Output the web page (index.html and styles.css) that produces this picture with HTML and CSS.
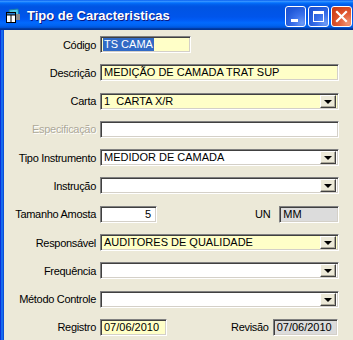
FILE: index.html
```html
<!DOCTYPE html>
<html>
<head>
<meta charset="utf-8">
<link rel="stylesheet" href="styles.css">
</head>
<body>
<div class="window">
  <div class="titlebar">
    <svg class="app-icon" width="16" height="16" viewBox="0 0 16 16">
      <path d="M4 2 L13 1 L14 9 L5 10 Z" fill="#4FC9E8" stroke="#1A7FA8" stroke-width="1"/>
      <rect x="11" y="6" width="4" height="6" fill="#8A8A8A"/>
      <rect x="1.5" y="4.5" width="9" height="10" fill="#fff" stroke="#000" stroke-width="1"/>
      <rect x="1.5" y="4.5" width="9" height="2.5" fill="#2A7FD4" stroke="#000" stroke-width="1"/>
      <line x1="6" y1="7" x2="6" y2="14.5" stroke="#000" stroke-width="1"/>
    </svg>
    <span class="title">Tipo de Caracteristicas</span>
    <div class="caption-buttons">
      <div class="cbtn blue"><span class="min-glyph"></span></div>
      <div class="cbtn blue"><span class="max-glyph"></span></div>
      <div class="cbtn red">
        <svg width="13" height="13" viewBox="0 0 13 13"><path d="M2 2 L11 11 M11 2 L2 11" stroke="#fff" stroke-width="2.2" stroke-linecap="square"/></svg>
      </div>
    </div>
  </div>
  <div class="client">
    <div class="form">
      <div class="row">
        <label class="lbl">Código</label>
        <div class="field yellow w-code"><span class="sel">TS CAMA</span></div>
      </div>
      <div class="row">
        <label class="lbl">Descrição</label>
        <div class="field yellow w-full">MEDIÇÃO DE CAMADA TRAT SUP</div>
      </div>
      <div class="row">
        <label class="lbl">Carta</label>
        <div class="field yellow w-full combo"><span class="val">1  CARTA X/R</span><span class="drop"><span class="tri"></span></span></div>
      </div>
      <div class="row">
        <label class="lbl disabled">Especificação</label>
        <div class="field w-full"></div>
      </div>
      <div class="row">
        <label class="lbl">Tipo Instrumento</label>
        <div class="field w-full combo"><span class="val">MEDIDOR DE CAMADA</span><span class="drop"><span class="tri"></span></span></div>
      </div>
      <div class="row">
        <label class="lbl">Instrução</label>
        <div class="field w-full combo"><span class="val"></span><span class="drop"><span class="tri"></span></span></div>
      </div>
      <div class="row">
        <label class="lbl">Tamanho Amosta</label>
        <div class="field w-qty num">5</div>
        <label class="lbl2 un">UN</label>
        <div class="field grey w-un">MM</div>
      </div>
      <div class="row">
        <label class="lbl">Responsável</label>
        <div class="field yellow w-full combo"><span class="val">AUDITORES DE QUALIDADE</span><span class="drop"><span class="tri"></span></span></div>
      </div>
      <div class="row">
        <label class="lbl">Frequência</label>
        <div class="field w-full combo"><span class="val"></span><span class="drop"><span class="tri"></span></span></div>
      </div>
      <div class="row">
        <label class="lbl">Método Controle</label>
        <div class="field w-full combo"><span class="val"></span><span class="drop"><span class="tri"></span></span></div>
      </div>
      <div class="row">
        <label class="lbl">Registro</label>
        <div class="field yellow w-date">07/06/2010</div>
        <label class="lbl2 rev">Revisão</label>
        <div class="field grey w-date2">07/06/2010</div>
      </div>
    </div>
  </div>
</div>
</body>
</html>
```
FILE: styles.css
```css
html, body {
  margin: 0;
  padding: 0;
  overflow: hidden;
  background: #ECE9D8;
}
body {
  width: 353px;
  height: 340px;
  font-family: "Liberation Sans", Arial, sans-serif;
  font-size: 11px;
  color: #000;
}
.window {
  width: 360px;
  height: 340px;
  display: flex;
  flex-direction: column;
}
.titlebar {
  height: 30px;
  flex: none;
  display: flex;
  align-items: center;
  padding-left: 5px;
  background: linear-gradient(to bottom, #0058EE 0%, #3A93FF 4%, #288EFF 6%, #127DFF 8%, #036FFC 10%, #0262EE 14%, #0057E5 20%, #0054E3 24%, #0055EB 56%, #005BF5 66%, #026AFE 76%, #0062EF 86%, #0052D6 92%, #0040AB 94%, #003092 100%);
}
.app-icon {
  flex: none;
  margin-top: 1px;
}
.title {
  margin-left: 6px;
  color: #fff;
  font-family: "Liberation Sans", Arial, sans-serif;
  font-weight: bold;
  font-size: 13px;
  letter-spacing: 0;
  text-shadow: 1px 1px #0A1883;
  flex: 1;
  padding-top: 1px;
}
.caption-buttons {
  display: flex;
  gap: 2px;
  margin-right: 8px;
  margin-top: 3px;
}
.cbtn {
  width: 19px;
  height: 19px;
  border: 1px solid #fff;
  border-radius: 3px;
  position: relative;
  display: flex;
  align-items: center;
  justify-content: center;
}
.cbtn.blue {
  background: radial-gradient(circle at 85% 85%, #6D9BF5 0%, #3C72EC 35%, #225AD9 70%, #1E4FD0 100%);
}
.cbtn.red {
  background: radial-gradient(circle at 85% 85%, #F09676 0%, #E35C36 40%, #D2431C 75%, #C73A12 100%);
}
.min-glyph {
  position: absolute;
  left: 5px;
  top: 12px;
  width: 7px;
  height: 3px;
  background: #fff;
}
.max-glyph {
  width: 9px;
  height: 7px;
  border: 1px solid #fff;
  border-top-width: 3px;
}
.client {
  flex: 1;
  background: linear-gradient(to right, #0831D9 0, #0831D9 1px, #166AEE 1px, #166AEE 3px, #0A4FD8 3px, #0A4FD8 4px, #ECE9D8 4px);
  padding-top: 6px;
}
.form {
  display: flex;
  flex-direction: column;
  gap: 11.3px;
}
.row {
  display: flex;
  align-items: center;
  height: 17px;
}
.lbl {
  width: 96px;
  flex: none;
  text-align: right;
  margin-right: 4px;
  white-space: nowrap;
  letter-spacing: -0.3px;
}
.lbl.disabled {
  color: #ACA899;
  text-shadow: 1px 1px #fff;
}
.field {
  box-sizing: border-box;
  height: 17px;
  background: #fff;
  border-top: 1px solid #808080;
  border-left: 1px solid #808080;
  border-bottom: 1px solid #fff;
  border-right: 1px solid #fff;
  box-shadow: inset 1px 1px #404040, inset -1px -1px #D4D0C8;
  padding: 1px 3px 0 3px;
  line-height: 13px;
  white-space: pre;
  overflow: hidden;
  flex: none;
}
.field.yellow { background: #FFFFC8; }
.field.grey { background: #DCDCDC; }
.w-code { width: 91px; padding-left: 2px; }
.w-full { width: 239px; }
.w-qty { width: 57px; }
.w-un { width: 60px; }
.w-date { width: 67px; }
.w-date2 { width: 65px; }
.num { text-align: right; padding-right: 5px; }
.sel {
  background: #316AC5;
  color: #fff;
  display: inline-block;
  padding: 0 1px;
  line-height: 13px;
}
.lbl2 { flex: none; white-space: nowrap; letter-spacing: -0.3px; }
.un { margin-left: 98px; margin-right: 9px; }
.rev { margin-left: 64px; margin-right: 4px; }
.combo {
  display: flex;
  align-items: flex-start;
  padding-right: 2px;
}
.combo .val {
  flex: 1;
  white-space: pre;
}
.drop {
  flex: none;
  box-sizing: border-box;
  width: 16px;
  height: 13px;
  margin-top: 0;
  background: #ECE9D8;
  border-top: 1px solid #fff;
  border-left: 1px solid #fff;
  border-right: 1px solid #404040;
  border-bottom: 1px solid #404040;
  box-shadow: inset -1px -1px #ACA899;
  display: flex;
  align-items: center;
  justify-content: center;
}
.tri {
  width: 0;
  height: 0;
  border-left: 4px solid transparent;
  border-right: 4px solid transparent;
  border-top: 4px solid #000;
  margin-top: 1px;
}
```
